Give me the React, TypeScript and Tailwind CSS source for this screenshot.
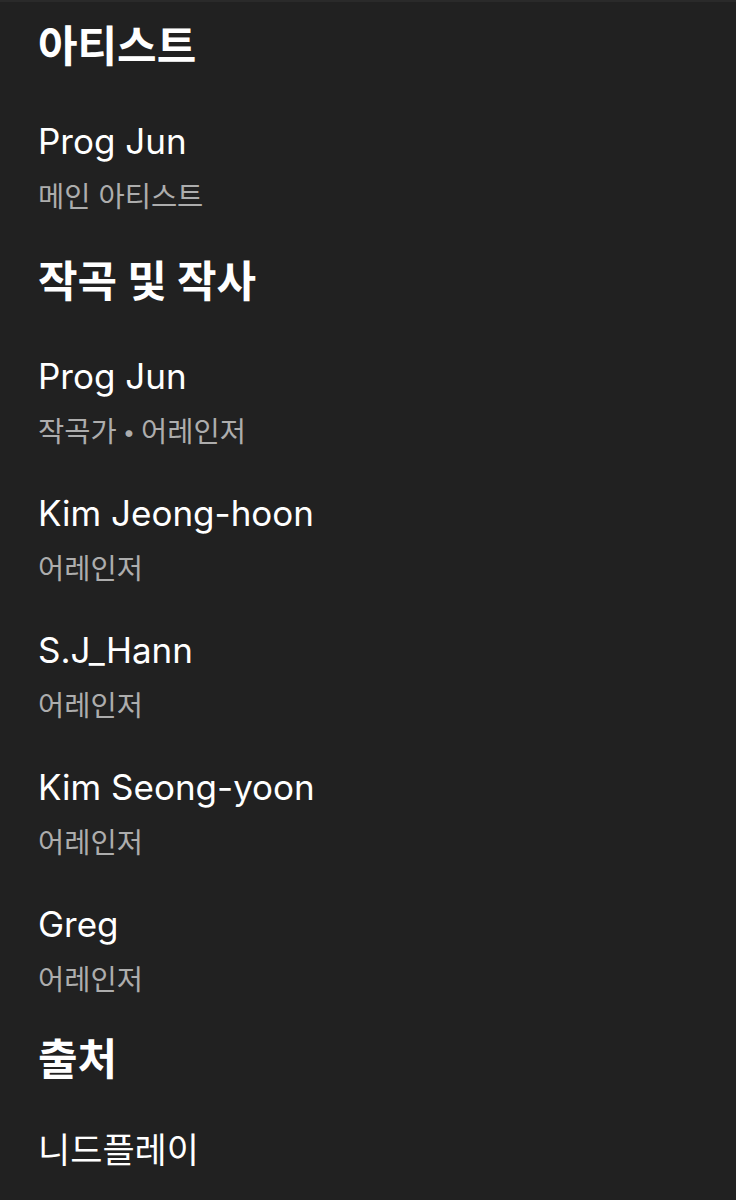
import React from 'react';

type Credit = { name: string; roles: string[] };

const sections: { title: string; gap: string; listGap: string; credits: Credit[] }[] = [
  {
    title: '아티스트',
    gap: '',
    listGap: 'mt-[49px]',
    credits: [{ name: 'Prog Jun', roles: ['메인 아티스트'] }],
  },
  {
    title: '작곡 및 작사',
    gap: 'mt-[41px]',
    listGap: 'mt-[49px]',
    credits: [
      { name: 'Prog Jun', roles: ['작곡가', '어레인저'] },
      { name: 'Kim Jeong-hoon', roles: ['어레인저'] },
      { name: 'S.J_Hann', roles: ['어레인저'] },
      { name: 'Kim Seong-yoon', roles: ['어레인저'] },
      { name: 'Greg', roles: ['어레인저'] },
    ],
  },
  {
    title: '출처',
    gap: 'mt-[36px]',
    listGap: 'mt-[45px]',
    credits: [{ name: '니드플레이', roles: [] }],
  },
];

function CreditRow({ credit }: { credit: Credit }) {
  return (
    <li>
      <p className="text-[35px] leading-[42px] text-white">{credit.name}</p>
      {credit.roles.length > 0 && (
        <p className="mt-[17px] text-[28.5px] leading-[36px] text-[#adadad]">
          {credit.roles.map((role, i) => (
            <React.Fragment key={role}>
              {i > 0 && <span className="mx-[6px] text-[22px] align-[2px]">•</span>}
              {role}
            </React.Fragment>
          ))}
        </p>
      )}
    </li>
  );
}

export default function App() {
  return (
    <div
      className="min-h-screen bg-[#212121] border-t-2 border-[#2a2a2a] px-[38px] pt-[19px] pb-10"
      style={{ fontFamily: "Inter, 'Noto Sans CJK KR', sans-serif" }}
    >
      {sections.map((section) => (
        <section key={section.title} className={section.gap}>
          <h2 className="text-[43px] leading-[50px] font-bold text-white">{section.title}</h2>
          <ul className={`${section.listGap} flex flex-col gap-[42px]`}>
            {section.credits.map((c) => (
              <CreditRow key={c.name + c.roles.join()} credit={c} />
            ))}
          </ul>
        </section>
      ))}
    </div>
  );
}
